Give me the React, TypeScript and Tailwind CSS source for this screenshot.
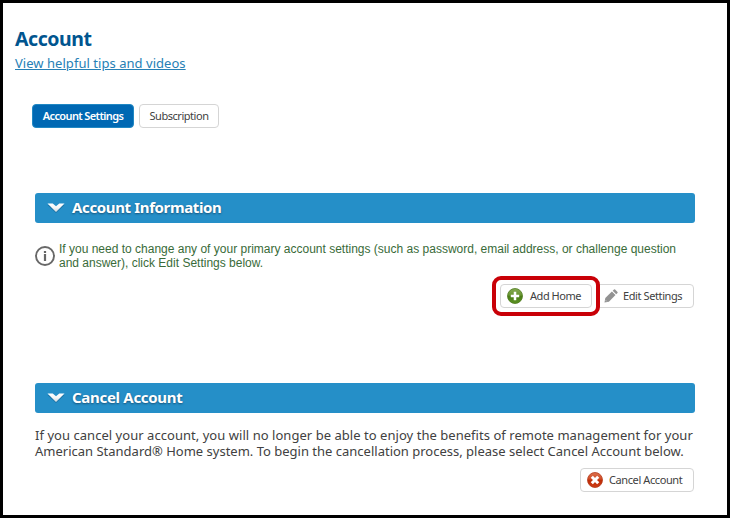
import type { ReactNode } from 'react';

function Chevron() {
  return (
    <svg width="18" height="12" viewBox="0 0 18 12" className="mr-[7px] shrink-0">
      <defs>
        <linearGradient id="chevron" x1="0" y1="0" x2="0" y2="1">
          <stop offset="0" stopColor="#ffffff" />
          <stop offset="0.5" stopColor="#f4f6f7" />
          <stop offset="1" stopColor="#ccd6dd" />
        </linearGradient>
      </defs>
      <path d="M.5 3H5.500L9 5.500 12.500 3h5L9 11z" fill="#1b71a4" />
      <path d="M.5 1.500H5.700L9 4.300 12.300 1.500h5.200L9 10z" fill="url(#chevron)" />
    </svg>
  );
}

function InfoIcon() {
  return (
    <svg width="20" height="20" viewBox="0 0 20 20" className="mt-1 shrink-0">
      <circle cx="10" cy="10" r="9" fill="#fff" stroke="#686868" strokeWidth="1.900" />
      <rect x="8.900" y="5" width="2.200" height="2" fill="#666" />
      <rect x="8.900" y="8" width="2.200" height="7" fill="#666" />
    </svg>
  );
}

function AddIcon() {
  return (
    <svg width="16" height="16" viewBox="0 0 16 16">
      <defs>
        <linearGradient id="add" x1="0" y1="0" x2="0" y2="1">
          <stop offset="0" stopColor="#86ab52" />
          <stop offset="0.45" stopColor="#6a9632" />
          <stop offset="0.5" stopColor="#4b7d16" />
          <stop offset="1" stopColor="#5b9222" />
        </linearGradient>
      </defs>
      <circle cx="8" cy="8" r="7.500" fill="url(#add)" stroke="#4d7a1d" strokeWidth="0.8" />
      <path d="M8 3.800v8.400M3.800 8h8.400" stroke="#fff" strokeWidth="2.500" />
    </svg>
  );
}

function PencilIcon() {
  return (
    <svg width="14" height="14" viewBox="0 0 14 14" fill="#929292">
      <path d="M.5 13.500 1.300 9.100 7.900 2.500 11.500 6.100 4.900 12.700z" />
      <path d="M8.700 1.800 10 .5q.6-.4 1.100 0l2.400 2.400q.4.600 0 1.100L12.200 5.300z" />
      <path d="M1.600 11.200 2.800 12.400" stroke="#fff" strokeWidth="0.5" />
    </svg>
  );
}

function CancelIcon() {
  return (
    <svg width="16" height="16" viewBox="0 0 16 16">
      <defs>
        <linearGradient id="cancel" x1="0" y1="0" x2="0" y2="1">
          <stop offset="0" stopColor="#db714f" />
          <stop offset="0.45" stopColor="#cf4a23" />
          <stop offset="0.5" stopColor="#bd2b05" />
          <stop offset="1" stopColor="#ce3d16" />
        </linearGradient>
      </defs>
      <circle cx="8" cy="8" r="7.500" fill="url(#cancel)" stroke="#b53a1b" strokeWidth="0.8" />
      <path d="m4.800 4.800 6.400 6.400M11.200 4.800l-6.400 6.400" stroke="#fff" strokeWidth="3" />
    </svg>
  );
}

function SectionHeader({ title, className }: { title: string; className: string }) {
  return (
    <div className="flex h-[30px] items-center rounded-[3px] bg-[#258fc8] pl-3">
      <Chevron />
      <h2 className={`pb-[2px] text-[15px] font-bold text-white [text-shadow:0_1px_2px_#17547a] ${className}`}>{title}</h2>
    </div>
  );
}

function Button({ icon, className, children }: { icon?: ReactNode; className: string; children: ReactNode }) {
  return (
    <button className={`flex h-6 shrink-0 items-center rounded-[4px] border text-[11px] whitespace-nowrap ${className}`}>
      {icon}
      <span>{children}</span>
    </button>
  );
}

export default function App() {
  return (
    <div className="h-[518px] w-[730px] overflow-hidden border-3 border-black bg-white font-['Noto_Sans',sans-serif] text-[#414141]">
      <header className="pt-[22px] pl-3">
        <h1 className="text-[19.5px] leading-7 font-bold tracking-[-0.45px] text-[#00558f]">Account</h1>
        <a href="#" className="block w-fit text-[13px] leading-5 tracking-[0.04px] text-[#2680b5] underline">
          View helpful tips and videos
        </a>
      </header>

      <nav className="mt-[31px] ml-[29px] flex gap-[5px]">
        <Button className="w-[102px] justify-center border-[#2188c3] bg-[#0068b3] font-semibold tracking-[-0.62px] text-white">
          Account Settings
        </Button>
        <Button className="w-20 justify-center border-[#d5d5d5] tracking-[-0.46px]">Subscription</Button>
      </nav>

      <main className="mr-8 ml-8 w-[660px]">
        <section className="mt-[65px]">
          <SectionHeader title="Account Information" className="tracking-[-0.36px]" />
          <div className="mt-[19px] flex gap-1">
            <InfoIcon />
            <p className="font-['Liberation_Sans',Arial,sans-serif] text-[12px] leading-[14px] whitespace-nowrap text-[#396b39]">
              If you need to change any of your primary account settings (such as password, email address, or challenge question
              <br />
              and answer), click Edit Settings below.
            </p>
          </div>
          <div className="mt-[6px] mr-[1px] flex justify-end">
            <div className="z-10 -mr-1 rounded-[9px] border-4 border-[#c90007] bg-white p-1">
              <Button icon={<AddIcon />} className="w-[92px] gap-[7px] border-[#d5d5d5] pl-[6px] tracking-[-0.45px]">
                Add Home
              </Button>
            </div>
            <Button icon={<PencilIcon />} className="mt-2 w-[98px] gap-[5px] border-[#d5d5d5] pl-[7px] tracking-[-0.4px]">
              Edit Settings
            </Button>
          </div>
        </section>

        <section className="mt-[67px]">
          <SectionHeader title="Cancel Account" className="tracking-[-0.3px]" />
          <p className="mt-[14px] text-[13px] leading-4 whitespace-nowrap">
            <span className="tracking-[0.04px]">
              If you cancel your account, you will no longer be able to enjoy the benefits of remote management for your
            </span>
            <br />
            American Standard® Home system. To begin the cancellation process, please select Cancel Account below.
          </p>
          <div className="mt-[9px] mr-[1px] flex justify-end">
            <Button icon={<CancelIcon />} className="w-[114px] gap-[6px] border-[#d5d5d5] pl-[6px] tracking-[-0.4px]">
              Cancel Account
            </Button>
          </div>
        </section>
      </main>
    </div>
  );
}
